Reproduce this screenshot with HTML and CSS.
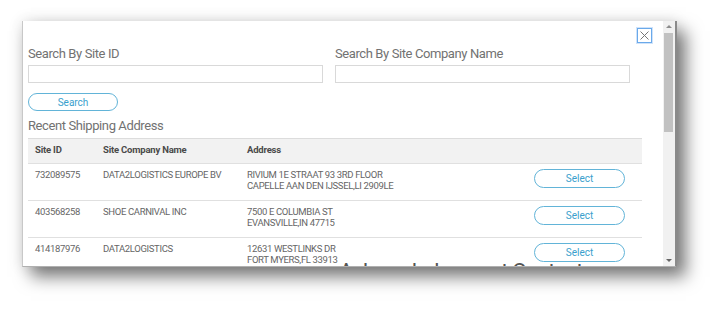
FILE: index.html
```html
<!DOCTYPE html>
<html>
<head>
<meta charset="utf-8">
<link rel="stylesheet" href="styles.css">
</head>
<body>
<div class="stage">
  <div class="window">
    <div class="content">
      <div class="topbar">
        <button class="close" aria-label="Close">
          <svg width="9" height="9" viewBox="0 0 9 9"><path d="M0.5 0.5L8.5 8.5M8.5 0.5L0.5 8.5" stroke="#777" stroke-width="1" fill="none"/></svg>
        </button>
      </div>
      <div class="search-grid">
        <div class="field">
          <label class="label">Search By Site ID</label>
          <input class="input" type="text">
        </div>
        <div class="field">
          <label class="label">Search By Site Company Name</label>
          <input class="input" type="text">
        </div>
      </div>
      <button class="pill search-btn">Search</button>
      <div class="heading">Recent Shipping Address</div>
      <div class="table">
        <div class="thead">
          <div class="cell">Site ID</div>
          <div class="cell">Site Company Name</div>
          <div class="cell">Address</div>
          <div class="cell"></div>
        </div>
        <div class="row">
          <div class="cell">732089575</div>
          <div class="cell">DATA2LOGISTICS EUROPE BV</div>
          <div class="cell">RIVIUM 1E STRAAT 93 3RD FLOOR<br>CAPELLE AAN DEN IJSSEL,LI 2909LE</div>
          <div class="cell act"><button class="pill select-btn">Select</button></div>
        </div>
        <div class="row">
          <div class="cell">403568258</div>
          <div class="cell">SHOE CARNIVAL INC</div>
          <div class="cell">7500 E COLUMBIA ST<br>EVANSVILLE,IN 47715</div>
          <div class="cell act"><button class="pill select-btn">Select</button></div>
        </div>
        <div class="row">
          <div class="cell">414187976</div>
          <div class="cell">DATA2LOGISTICS</div>
          <div class="cell">12631 WESTLINKS DR<br>FORT MYERS,FL 33913</div>
          <div class="cell act"><button class="pill select-btn">Select</button></div>
        </div>
      </div>
    </div>
    <div class="scrollbar">
      <div class="arrow up"></div>
      <div class="track"><div class="thumb"></div></div>
      <div class="arrow down"></div>
    </div>
    <div class="bleed">Acknowledgement Contact</div>
  </div>
</div>
</body>
</html>
```
FILE: styles.css
```css
* { box-sizing: border-box; }
html, body { margin: 0; padding: 0; background: #fff; }
body {
  font-family: Roboto, "Liberation Sans", sans-serif;
  width: 720px;
  height: 312px;
  overflow: hidden;
}
.stage {
  padding: 21px 0 0 22px;
}
.window {
  position: relative;
  width: 655px;
  height: 246px;
  display: flex;
  background: #fff;
  border-left: 1px solid #c8c8c8;
  border-right: 2px solid #8a8a8a;
  border-bottom: 1px solid #b0b0b0;
  box-shadow: 9px 10px 16px rgba(0,0,0,0.5), 0 0 14px rgba(0,0,0,0.12);
  overflow: hidden;
}
.content {
  flex: 1;
  padding: 7px 0 0 5px;
  overflow: hidden;
}
.topbar {
  display: flex;
  justify-content: flex-end;
  padding-right: 11px;
  height: 15px;
}
.close {
  width: 15px;
  height: 15px;
  padding: 0;
  margin: 0;
  border: 1px solid #6aa9ea;
  box-shadow: 0 0 0 1px #cfe3fa;
  background: #fff;
  display: flex;
  align-items: center;
  justify-content: center;
}
.search-grid {
  display: grid;
  grid-template-columns: 295px 295px;
  column-gap: 12px;
  margin-top: 3px;
}
.field { display: flex; flex-direction: column; }
.label {
  font-size: 13px;
  line-height: 16px;
  letter-spacing: -0.4px;
  color: #727272;
  height: 16px;
}
.input {
  margin: 3px 0 0;
  height: 18px;
  border: 1px solid #d9d9d9;
  background: #fff;
  padding: 0;
}
.pill {
  font-family: Roboto, "Liberation Sans", sans-serif;
  background: #fff;
  border: 1px solid #62b4d8;
  border-radius: 10px;
  color: #3a9fcd;
  font-size: 10px;
  padding: 0;
  display: flex;
  align-items: center;
  justify-content: center;
}
.search-btn {
  margin-top: 10px;
  width: 90px;
  height: 18px;
}
.heading {
  margin-top: 7px;
  font-size: 13px;
  line-height: 16px;
  letter-spacing: -0.4px;
  color: #727272;
}
.table {
  margin-top: 4px;
  width: 614px;
}
.thead, .row {
  display: grid;
  grid-template-columns: 68px 144px 287px 1fr;
}
.thead {
  height: 25px;
  background: #f2f2f2;
  border-top: 1px solid #dcdcdc;
  font-weight: 700;
  font-size: 9.5px;
  line-height: 11px;
  color: #4a4a4a;
  letter-spacing: -0.2px;
}
.thead .cell { padding-top: 5px; }
.cell { padding-left: 7px; }
.row {
  height: 37px;
  border-top: 1px solid #e0e0e0;
  font-size: 9.5px;
  line-height: 11px;
  color: #666;
  letter-spacing: -0.35px;
}
.row .cell { padding-top: 5px; }
.row .cell.act { padding-top: 5px; }
.select-btn {
  width: 91px;
  height: 19px;
  font-size: 10px;
}
.scrollbar {
  width: 12px;
  background: #f1f1f1;
  display: flex;
  flex-direction: column;
  align-items: center;
}
.arrow { width: 0; height: 0; border-left: 3px solid transparent; border-right: 3px solid transparent; }
.arrow.up { border-bottom: 3px solid #8c8c8c; margin-top: 4px; }
.arrow.down { border-top: 3px solid #666; margin-bottom: 4px; }
.track { flex: 1; width: 100%; padding: 5px 2px 0 1px; }
.thumb { width: 9px; height: 99px; background: #c1c1c1; }
.bleed {
  position: absolute;
  left: 316px;
  top: 238px;
  font-size: 22px;
  color: #555;
  letter-spacing: -0.9px;
  white-space: nowrap;
}
```
